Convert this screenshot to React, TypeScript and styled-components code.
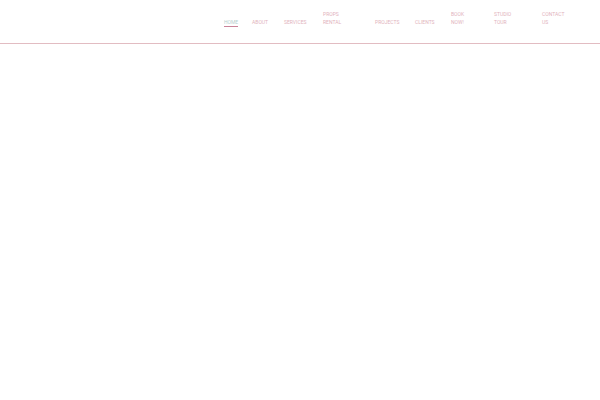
import React from 'react'
import styled, {createGlobalStyle} from 'styled-components'


const GlobalStyle = createGlobalStyle`
  body {
    margin: 0;
    background: #fff;
    font-family: Roboto, sans-serif;
  }
`

const Header = styled.header`
  padding: 10px 20px 16px;
  border-bottom: 1px solid #e2bcc2;
`

const NavList = styled.ul`
  display: flex;
  justify-content: flex-end;
  align-items: flex-end;
  gap: 14px;
  margin: 0;
  padding: 0;
  list-style: none;
`

const NavItem = styled.li<{$width: number}>`
  flex: 0 0 ${({$width}) => $width}px;
  min-width: 0;
`

const NavLink = styled.a<{$active?: boolean}>`
  display: block;
  border-bottom: 1px solid ${({$active}) => ($active ? '#c98399' : 'transparent')};
  color: ${({$active}) => ($active ? '#b5cfcf' : '#dfb3bd')};
  font-size: 5px;
  line-height: 8px;
  text-decoration: none;
  text-transform: uppercase;
`

const links = [
  {lines: ['Home'], width: 14, active: true},
  {lines: ['About'], width: 18},
  {lines: ['Services'], width: 25},
  {lines: ['Props', 'Rental'], width: 38},
  {lines: ['Projects'], width: 26},
  {lines: ['Clients'], width: 22},
  {lines: ['Book', 'Now!'], width: 29},
  {lines: ['Studio', 'Tour'], width: 34},
  {lines: ['Contact', 'Us'], width: 38},
]

const App: React.FC = () => (
  <>
    <GlobalStyle />
    <Header>
      <nav>
        <NavList>
          {links.map(({lines, width, active}) => (
            <NavItem key={lines[0]} $width={width}>
              <NavLink href="#" $active={active}>
                {lines.map((line, i) => (
                  <React.Fragment key={line}>
                    {i > 0 && <br />}
                    {line}
                  </React.Fragment>
                ))}
              </NavLink>
            </NavItem>
          ))}
        </NavList>
      </nav>
    </Header>
  </>
)

export default App
